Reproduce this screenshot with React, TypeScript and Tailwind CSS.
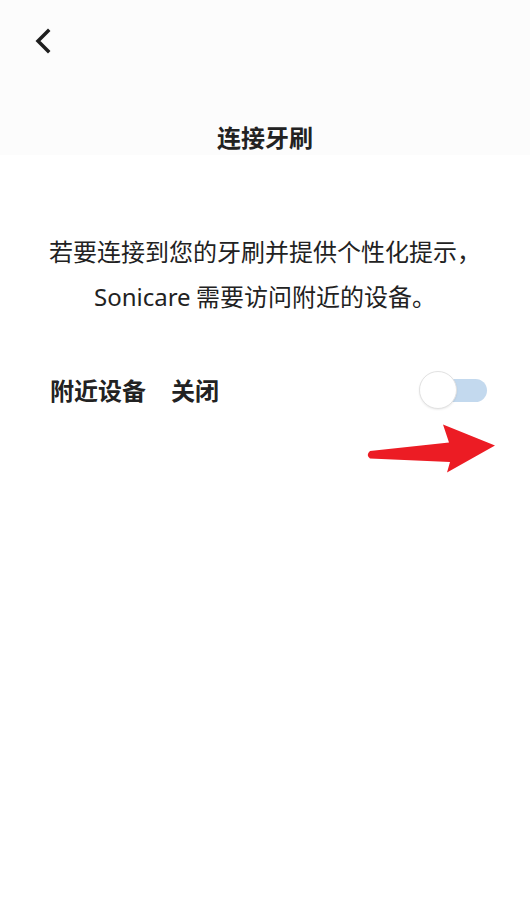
import React from "react";

export default function App() {
  const cjk = { fontFamily: '"Noto Sans CJK SC", "Noto Sans", sans-serif' };
  return (
    <div className="w-[530px] h-[915px] bg-white text-[#222222] flex flex-col" style={cjk}>
      <div className="h-[155px] bg-[#fcfcfc] flex flex-col">
        <div className="h-[82px] pl-[33px] pt-[28px]">
          <svg width="22" height="26" viewBox="0 0 22 26">
            <path d="M15 3 L5 13 L15 23" fill="none" stroke="#1e1e1e" strokeWidth="3.5" strokeLinecap="square" strokeLinejoin="miter" />
          </svg>
        </div>
        <div className="flex justify-center pt-[43px]">
          <span className="text-[24px] font-bold leading-none">连接牙刷</span>
        </div>
      </div>
      <div className="flex flex-col items-center pt-[73px] text-[24px] leading-[45px]">
        <p>若要连接到您的牙刷并提供个性化提示，</p>
        <p>
          <span style={{ fontFamily: '"Noto Sans", sans-serif' }}>Sonicare</span> 需要访问附近的设备。
        </p>
      </div>
      <div className="flex items-center justify-between pl-[50px] pr-[43px] mt-[51px] h-[40px]">
        <div className="text-[24px] font-bold flex gap-[25px]">
          <span>附近设备</span>
          <span>关闭</span>
        </div>
        <div className="relative w-[68px] h-[38px] flex items-center">
          <div className="absolute left-[18px] right-0 h-[23px] rounded-full bg-[#c3d9ee]"></div>
          <div className="absolute left-0 top-0 w-[38px] h-[38px] rounded-full bg-white border border-[#e2e2e2] shadow-[0_1px_2px_rgba(0,0,0,0.08)]"></div>
        </div>
      </div>
      <div className="flex justify-end pr-[34px] mt-[14px]">
        <svg width="130" height="50" viewBox="366 425 130 50">
          <path
            d="M370 452 L449 443.5 L443 425.5 L495 446.5 L447 473.5 L450 463 L370 459.5 Q365.5 456 370 452 Z"
            fill="#ec1c24"
          />
        </svg>
      </div>
    </div>
  );
}
